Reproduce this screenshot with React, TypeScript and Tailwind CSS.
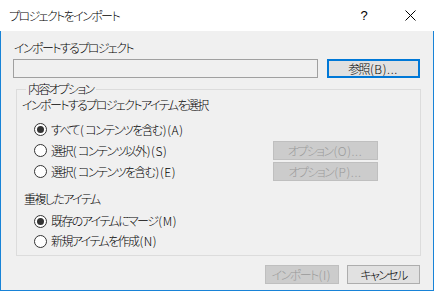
import React from 'react';

const font = "[font-family:'Noto_Sans_CJK_JP','Noto_Sans',sans-serif] [font-feature-settings:'palt'] tracking-[-1.6px] font-light";

// ASCII runs (parens, mnemonics, dots) keep normal spacing
const T = ({ text }: { text: string }) => (
  <>
    {text.split(/([\x20-\x7e]+)/).map((part, i) =>
      /^[\x20-\x7e]+$/.test(part) ? (
        <span key={i} className="tracking-[0.6px] [font-feature-settings:normal] px-[1px]">
          {part}
        </span>
      ) : (
        <React.Fragment key={i}>{part}</React.Fragment>
      )
    )}
  </>
);

const Radio = ({ checked, label }: { checked?: boolean; label: string }) => (
  <div className="flex items-center h-full">
    <span className="w-[13px] h-[13px] rounded-full border border-[#333] bg-white flex items-center justify-center shrink-0">
      {checked && <span className="w-[7px] h-[7px] rounded-full bg-[#333]" />}
    </span>
    <span className="ml-[4px] text-[12px] leading-4 text-black">
      <T text={label} />
    </span>
  </div>
);

const Button = ({ label, disabled, primary, className = '' }: { label: string; disabled?: boolean; primary?: boolean; className?: string }) => (
  <div
    className={`h-[19px] flex items-center justify-center text-[12px] leading-4 ${
      disabled
        ? 'bg-[#cccccc] border border-[#bfbfbf] text-[#9a9a9a]'
        : primary
        ? 'bg-[#e1e1e1] border-2 border-[#0078d7] text-black'
        : 'bg-[#e1e1e1] border border-[#adadad] text-black'
    } ${className}`}
  >
    <span>
      <T text={label} />
    </span>
  </div>
);

const App = () => {
  return (
    <div className={`w-[434px] h-[291px] flex flex-col bg-[#f0f0f0] border-x border-b border-[#1883d7] ${font}`}>
      {/* Title bar */}
      <div className="h-[31px] bg-white flex items-center shrink-0 -mx-px pl-[9px] pr-0">
        <span className="text-[12px] leading-4 text-black">プロジェクトをインポート</span>
        <span className="ml-auto w-[46px] text-center text-[13px] text-black tracking-normal [font-family:'Liberation_Sans',sans-serif]">?</span>
        <span className="w-[46px] flex justify-center mr-[1px]">
          <svg width="11" height="11" viewBox="0 0 11 11">
            <path d="M0.5 0.5L10.5 10.5M10.5 0.5L0.5 10.5" stroke="#000" strokeWidth="1" />
          </svg>
        </span>
      </div>

      {/* Body */}
      <div className="flex-1 flex flex-col px-[12px] pt-[9px]">
        <div className="h-4 text-[12px] leading-4 text-black pl-[1px]">インポートするプロジェクト</div>
        <div className="mt-[3px] flex items-center">
          <div className="w-[305px] h-[19px] border border-[#a0a0a0] bg-[#f0f0f0]" />
          <Button label="参照(B)..." primary className="ml-[9px] w-[93px]" />
        </div>

        <fieldset className="mt-[3px] ml-[3px] border border-[#dcdcdc] pl-[5px] pb-[4px]">
          <legend className="ml-[4px] px-[2px] h-4 text-[12px] leading-4 text-black">内容オプション</legend>
          <div className="h-4 text-[12px] leading-4 text-black">インポートするプロジェクトアイテムを選択</div>
          <div className="mt-[6px] ml-[12px] flex flex-col">
            <div className="h-[21px] flex items-center">
              <Radio checked label="すべて(コンテンツを含む)(A)" />
            </div>
            <div className="h-[21px] flex items-center justify-between mr-[42px]">
              <Radio label="選択(コンテンツ以外)(S)" />
              <Button label="オプション(O)..." disabled className="w-[105px]" />
            </div>
            <div className="h-[21px] flex items-center justify-between mr-[42px]">
              <Radio label="選択(コンテンツを含む)(E)" />
              <Button label="オプション(P)..." disabled className="w-[105px]" />
            </div>
          </div>
          <div className="mt-[9px] ml-[2px] h-4 text-[12px] leading-4 text-black">重複したアイテム</div>
          <div className="mt-[4px] ml-[12px] flex flex-col">
            <div className="h-[20px]">
              <Radio checked label="既存のアイテムにマージ(M)" />
            </div>
            <div className="h-[20px]">
              <Radio label="新規アイテムを作成(N)" />
            </div>
          </div>
        </fieldset>

        <div className="mt-[9px] flex justify-end gap-[8px] mr-[1px]">
          <Button label="インポート(I)" disabled className="w-[74px]" />
          <Button label="キャンセル" className="w-[73px]" />
        </div>
      </div>
    </div>
  );
};

export default App;
